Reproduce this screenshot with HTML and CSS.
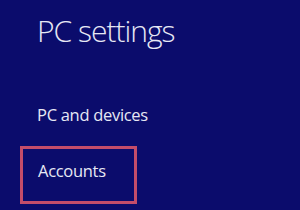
FILE: index.html
```html
<!DOCTYPE html>
<html lang="en">
<head>
  <meta charset="UTF-8">
  <title>PC settings</title>
  <link rel="stylesheet" href="styles.css">
</head>
<body>
  <div class="panel">
    <h1>PC settings</h1>

    <ul class="menu">
      <li class="item">PC and devices</li>
      <li class="item selected">Accounts</li>
    </ul>
  </div>
</body>
</html>
```

FILE: styles.css
```css
* {
  margin: 0;
  padding: 0;
  box-sizing: border-box;
}

body {
  background-color: #0b0c6c;
  width: 300px;
  height: 210px;
  overflow: hidden;
  font-family: "Open Sans", "Noto Sans", sans-serif;
  color: #e6e8f4;
}

.panel {
  padding: 11px 0 0 37px;
}

h1 {
  font-size: 30px;
  font-weight: 300;
  line-height: 40px;
  letter-spacing: -1px;
}

.menu {
  list-style: none;
  margin-top: 52px;
}

.item {
  font-size: 16.5px;
  line-height: 24px;
  height: 24px;
  letter-spacing: -0.3px;
}

.selected {
  margin: 19px 0 0 -17px;
  width: 117px;
  height: 58px;
  padding: 10px 0 0 15px;
  border: 3px solid #c44d6a;
}
```
